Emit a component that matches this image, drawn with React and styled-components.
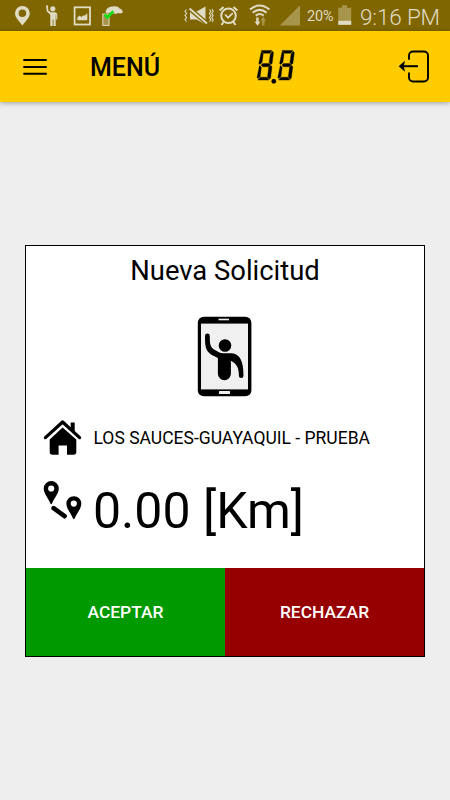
import React from "react";
import styled, { createGlobalStyle } from "styled-components";

const GlobalStyle = createGlobalStyle`
  * {
    box-sizing: border-box;
  }
  body {
    margin: 0;
    background: #eee;
    font-family: Roboto, "Liberation Sans", sans-serif;
    color: #000;
  }
`;

const light = "#e0dbc4";
const dim = "#a8954c";

const Screen = styled.div`
  display: flex;
  flex-direction: column;
  width: 450px;
  height: 800px;
  overflow: hidden;
  background: #eee;
`;

const StatusBar = styled.div`
  display: flex;
  align-items: center;
  height: 31px;
  flex-shrink: 0;
  background: #7f6600;
  color: ${light};
`;

const Icon = styled.svg`
  display: block;
  flex-shrink: 0;
  margin-left: ${(props) => props.$left || 0}px;
`;

const Percent = styled.span`
  width: 31px;
  margin-left: 7px;
  padding-top: 3px;
  font-size: 14.5px;
  line-height: 20px;
  letter-spacing: -0.2px;
  white-space: nowrap;
`;

const Time = styled.span`
  margin-left: 8px;
  padding-top: 2px;
  font-size: 22.5px;
  font-weight: 300;
  line-height: 28px;
  letter-spacing: -0.15px;
  white-space: nowrap;
`;

const Header = styled.header`
  display: flex;
  align-items: center;
  height: 71px;
  flex-shrink: 0;
  background: #ffcc00;
  box-shadow: 0 1px 5px rgba(0, 0, 0, 0.35);
`;

const Title = styled.h1`
  width: 166px;
  margin: 0 0 0 43px;
  padding-top: 2px;
  font-size: 25px;
  font-weight: 500;
  line-height: 30px;
`;

const Card = styled.div`
  display: flex;
  flex-direction: column;
  width: 400px;
  height: 412px;
  margin: 143px auto 0;
  flex-shrink: 0;
  background: #fff;
  border: 1px solid #000;
`;

const CardTitle = styled.h2`
  margin: 9px 0 0;
  font-size: 27.4px;
  font-weight: 400;
  line-height: 32px;
  text-align: center;
`;

const PhoneIcon = styled.svg`
  display: block;
  align-self: center;
  margin-top: 29px;
`;

const Row = styled.div`
  display: flex;
  align-items: flex-start;
  height: ${(props) => props.$height}px;
  margin-top: ${(props) => props.$top}px;
  padding-left: 17px;
`;

const Address = styled.span`
  margin: 9px 0 0 11.5px;
  font-size: 17.5px;
  line-height: 20px;
  white-space: nowrap;
`;

const Distance = styled.span`
  margin: 1px 0 0 11px;
  font-size: 50px;
  line-height: 60px;
  white-space: nowrap;
`;

const Actions = styled.div`
  display: flex;
  height: 88px;
  margin-top: auto;
`;

const Button = styled.button`
  flex: 1;
  padding: 0 0 1px;
  border: none;
  background: ${(props) => props.$color};
  color: #fff;
  font-family: inherit;
  font-size: 17.4px;
  font-weight: 500;
`;

const Notifications = () => (
  <>
    <Icon $left={14} width="17" height="21" viewBox="14 5 17 21" fill={light}>
      <path
        fillRule="evenodd"
        d="M22.4 6a7.3 7.3 0 0 0-7.4 7.2c0 4.6 4.5 8.3 7.4 12.3 2.9-4 7.4-7.7 7.4-12.3A7.3 7.3 0 0 0 22.4 6Zm0 3.5a3.8 3.8 0 1 1 0 7.6 3.8 3.8 0 0 1 0-7.6Z"
      />
    </Icon>
    <Icon $left={14} width="14" height="22" viewBox="45 5 14 22" fill={light}>
      <circle cx="52.8" cy="8.8" r="2.6" />
      <path d="M46 5.5h2l.3 5 2.4 1.7h4.3q2.3.3 2.3 2.7v4.6h-1.1v-4.2h-.5V26h-2.2v-6.5h-.8V26h-2.4V14.8l-3.5-3.2Z" />
    </Icon>
    <Icon $left={14} width="19" height="20" viewBox="73 6 19 20">
      <rect x="74.6" y="7.3" width="15.4" height="17.2" fill="none" stroke={light} strokeWidth="1.8" />
      <path d="M77.3 20.3v-2.8l2.4-2 1.8 1.4 2-1.7 1 .6 2.8-2.6v7.1Z" fill={light} />
    </Icon>
    <Icon $left={10} width="22" height="22" viewBox="102 5 22 22">
      <rect x="102.8" y="14" width="6.2" height="11.4" fill={dim} stroke={light} />
      <path d="M105.5 12.500q.5-5 6-6 6.500-1.200 8 2 3.300.8 3.300 4.200l-2.500.8-2.500-.6q-2 1.400-4.500.6-2-1.700-5.500-.2Z" fill={light} />
      <path d="m104.7 14.5 2.7 3 6-6.3" fill="none" stroke="#12df16" strokeWidth="2.7" />
    </Icon>
  </>
);

const SystemIcons = () => (
  <>
    <Icon $left={59} width="31" height="19" viewBox="183 6 31 19" fill="none" stroke={light}>
      <path
        d="m186.5 9.5-1.5 2 1.6 2-1.6 2 1.6 2-1.6 2 1.5 2M209.5 9.5l1.4 2-1.5 2 1.5 2-1.5 2 1.5 2-1.4 2M212 9l1.2 2.2-1.4 2.2 1.4 2.2-1.4 2.2 1.4 2.2-1.2 2"
        strokeWidth="1.1"
      />
      <path d="M190 11.5h6.5l9-5v18l-9-5H190Z" fill={light} stroke="none" />
      <path d="m189.3 8.5 18 15.2" stroke="#7f6600" strokeWidth="4.4" />
      <path d="m189.5 8.5 17.5 15" strokeWidth="1.9" />
    </Icon>
    <Icon $left={4} width="21" height="21" viewBox="218 5 21 21" fill="none" stroke={light}>
      <circle cx="228.5" cy="15.8" r="7.3" strokeWidth="2" />
      <path d="m219.6 10.5 4-3.6M237.4 10.5l-4-3.6M223.5 22l-2 3M233.5 22l2 3" strokeWidth="2" />
      <path d="m225 14.5 3 3.2 4.8-4.5" strokeWidth="1.7" />
    </Icon>
    <Icon $left={10} width="22" height="23" viewBox="249 4 22 23" fill="none">
      <path d="M250 9.5q9.6-8 19.4 0M252.7 12.7q7-5.7 14 0M255.8 15.6q3.9-3.2 7.8 0" stroke={light} strokeWidth="2.1" />
      <path d="M256.2 17.5h2.4v4.2h1.8l-2.9 4-2.9-4h1.6Z" fill={light} />
      <path d="M262.1 25.4h2.4v-4.7h1.6l-2.8-4-2.8 4h1.6Z" fill={dim} />
    </Icon>
    <Icon $left={8} width="21" height="21" viewBox="279 5 21 21" fill={dim}>
      <path d="M300 5.3v20.2h-20.2Z" />
    </Icon>
  </>
);

const Battery = () => (
  <Icon width="14" height="21" viewBox="338 5 14 21">
    <path d="M342 5.2h5v2.5h4.2v17.1H338.3V7.7h3.7Z" fill={dim} />
    <path d="M338.3 20.8h12.9v4H338.3Z" fill={light} />
  </Icon>
);

const MenuIcon = () => (
  <Icon $left={23} width="24" height="18" viewBox="23 57 24 18">
    <path d="M23.3 59h23.5M23.3 66h23.5M23.3 72.7h23.5" stroke="#000" strokeWidth="2" />
  </Icon>
);

const Digit = () => (
  <>
    <path d="M3.2.4h10.8L11.8 3.3H4.9Z" />
    <path d="M3.2 1.6 5.1 4 4 12.4 1.8 14.4.7 13.4Z" />
    <path d="m14.4 1.3 1 1.4-1.4 10.9-1.4 1L11 12.6l1.2-8.7Z" />
    <path d="M3 15.1 4.7 13.5h6.2l1.5 1.6-1.7 1.7H4.5Z" />
    <path d="m1.4 15.6 1.9 1.7-1.2 9-2.2 2.3-.9-1.3Z" />
    <path d="m12.6 15.6 1.3 1-1.5 11.7-1.3 1-1.7-2.4 1.2-9.5Z" />
    <path d="M2 27.2h7l1.8 2.9H-.2Z" />
  </>
);

const DigitsIcon = () => (
  <Icon width="40" height="36" viewBox="256 49 40 36" stroke="#000" strokeWidth="0.35">
    <g transform="translate(258.1 50)">
      <Digit />
    </g>
    <g transform="translate(278.9 50)">
      <Digit />
    </g>
    <circle cx="273.8" cy="81.3" r="2.2" />
  </Icon>
);

const ExitIcon = () => (
  <Icon $left={102} width="32" height="34" viewBox="398 50 32 34" fill="none" stroke="#000">
    <path d="M409 59.8v-4.3a4 4 0 0 1 4-4h11a4 4 0 0 1 4 4v22a4 4 0 0 1-4 4h-11a4 4 0 0 1-4-4v-5" strokeWidth="1.9" />
    <path d="M402 66.2h16" strokeWidth="2" />
    <path d="M398.7 66.2 405 60.7l-1.2 5.5 1.2 5.6Z" fill="#000" stroke="none" />
  </Icon>
);

const HomeIcon = () => (
  <Icon width="39" height="38" viewBox="43 419 39 38">
    <path d="m45.4 437.6 17.2-15.6 17 15.6" fill="none" stroke="#000" strokeWidth="3.3" strokeLinecap="round" strokeLinejoin="round" />
    <path d="M70.7 422.6h4v9l-4-3.6Z" />
    <path d="M62.6 427.6 76.3 439.6v12.4q0 2.8-2.8 2.8H67v-9.4h-8.4v9.4h-6.1q-2.8 0-2.8-2.8v-12.4Z" />
  </Icon>
);

const RouteIcon = () => (
  <Icon width="39" height="40" viewBox="43 480 39 40">
    <path
      fillRule="evenodd"
      d="M51.2 481a7.5 7.5 0 0 0-7.5 7.5c0 5.4 4.5 9.2 6.7 15.1q.8 1.2 1.6 0c2.2-5.9 6.8-9.7 6.8-15.1a7.5 7.5 0 0 0-7.6-7.5Zm0 4.4a3.1 3.1 0 1 1 0 6.2 3.1 3.1 0 0 1 0-6.2ZM73.8 496.2a7.4 7.4 0 0 0-7.4 7.4c0 5.4 4.4 9.1 6.6 15q.8 1.2 1.6 0c2.2-5.9 6.7-9.6 6.7-15a7.4 7.4 0 0 0-7.5-7.4Zm0 4.3a3.1 3.1 0 1 1 0 6.2 3.1 3.1 0 0 1 0-6.2Z"
    />
    <path d="m53.6 508.2 11 8" stroke="#000" strokeWidth="4.6" strokeLinecap="round" />
  </Icon>
);

const App = () => {
  return (
    <Screen>
      <GlobalStyle />
      <StatusBar>
        <Notifications />
        <SystemIcons />
        <Percent>20%</Percent>
        <Battery />
        <Time>9:16 PM</Time>
      </StatusBar>
      <Header>
        <MenuIcon />
        <Title>MENÚ</Title>
        <DigitsIcon />
        <ExitIcon />
      </Header>
      <Card>
        <CardTitle>Nueva Solicitud</CardTitle>
        <PhoneIcon width="56" height="81" viewBox="197 316 56 81">
          <rect x="197.8" y="316.8" width="53.6" height="79.4" rx="6" />
          <rect x="201" y="323.6" width="47" height="65.8" fill="#f0f0f0" />
          <path d="M218.5 319.5h10.5" stroke="#eee" strokeWidth="1.6" />
          <rect x="219" y="391" width="11" height="3" rx="0.5" fill="#eee" />
          <circle cx="225" cy="345.5" r="6.3" />
          <path d="M205 336a2.4 2.4 0 0 1 4.8 0c0 8 .5 11 4.2 13.5 4 2.4 6 3.7 9 3.7h7.5c9.5 0 13 8 13 22.5a2.3 2.3 0 0 1-4.6 0c0-8-2-12-8-15v13a6.5 6.5 0 0 1-13 0v-15.500c-2-1.7-6-2.5-8.700-5.2-4-3.7-4.2-9-4.200-17Z" />
        </PhoneIcon>
        <Row $height={38} $top={22}>
          <HomeIcon />
          <Address>LOS SAUCES-GUAYAQUIL - PRUEBA</Address>
        </Row>
        <Row $height={60} $top={23}>
          <RouteIcon />
          <Distance>0.00 [Km]</Distance>
        </Row>
        <Actions>
          <Button $color="#009900">ACEPTAR</Button>
          <Button $color="#960000">RECHAZAR</Button>
        </Actions>
      </Card>
    </Screen>
  );
};

export default App;
